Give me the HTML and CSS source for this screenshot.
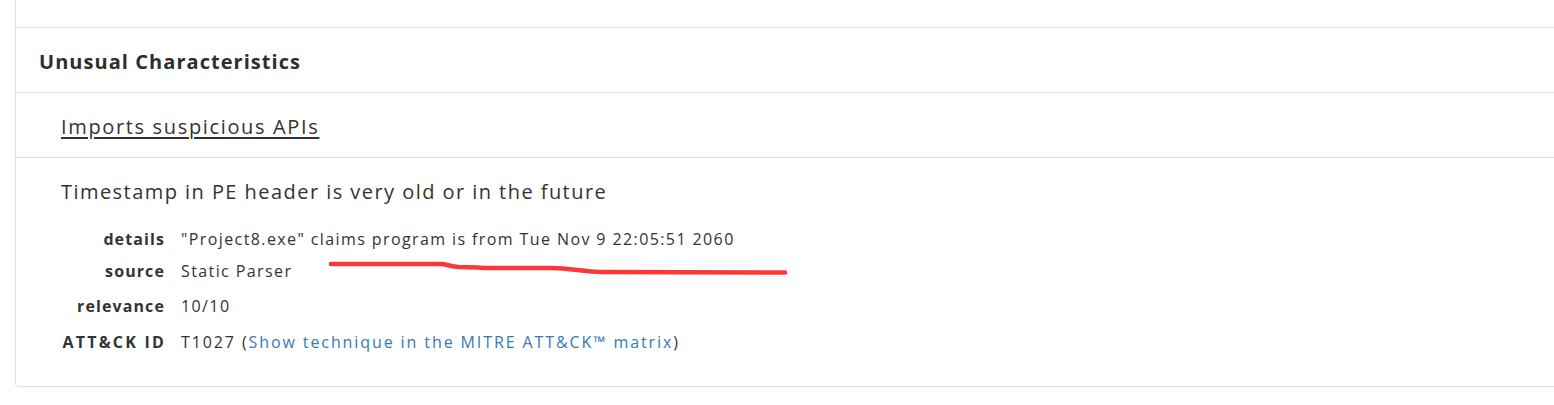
FILE: index.html
```html
<!DOCTYPE html>
<html lang="en">
<head>
<meta charset="utf-8">
<title>Unusual Characteristics</title>
<link rel="stylesheet" href="styles.css">
</head>
<body>
<div class="card">
  <div class="row row-top"></div>
  <div class="row row-head"><h3 class="heading">Unusual Characteristics</h3></div>
  <div class="row row-sub"><a class="sub-link" href="#">Imports suspicious APIs</a></div>
  <div class="item">
    <div class="item-title">Timestamp in PE header is very old or in the future</div>
    <dl class="props">
      <dt>details</dt><dd>"Project8.exe" claims program is from Tue Nov 9 22:05:51 2060</dd>
      <dt>source</dt><dd>Static Parser</dd>
      <dt>relevance</dt><dd>10/10</dd>
      <dt class="caps">ATT&amp;CK ID</dt><dd class="wide">T1027 (<a class="link" href="#">Show technique in the MITRE ATT&amp;CK™ matrix</a>)</dd>
    </dl>
  </div>
  <svg class="annot" width="470" height="20" viewBox="0 0 470 20">
    <path d="M3 4 L113 4 C118 4 120 6 130 7 L150 7.5 C155 8 158 8 165 8 L225 8 C240 8 258 12 272 12 L457 12.5" fill="none" stroke="#fb3838" stroke-width="4.5" stroke-linecap="round" stroke-linejoin="round"/>
  </svg>
</div>
</body>
</html>
```

FILE: styles.css
```css
html, body {
  margin: 0;
  padding: 0;
  background: #ffffff;
  overflow: hidden;
}

body {
  font-family: "Open Sans", "Noto Sans", sans-serif;
  color: #333333;
}

.card {
  position: relative;
  margin-left: 15px;
  width: 1560px;
  border: 1px solid #dddddd;
  border-top: none;
  border-radius: 0 0 4px 4px;
  background: #ffffff;
}

.row {
  border-bottom: 1px solid #dddddd;
}

.row-top {
  height: 27px;
}

.row-head {
  height: 65px;
  box-sizing: border-box;
  display: flex;
  align-items: center;
  padding: 3px 0 0 23px;
}

.heading {
  margin: 0;
  font-size: 20px;
  font-weight: 700;
  letter-spacing: 1.05px;
  color: #2e2e2e;
}

.row-sub {
  height: 65px;
  box-sizing: border-box;
  display: flex;
  align-items: center;
  padding: 3px 0 0 45px;
}

.sub-link {
  font-size: 20px;
  letter-spacing: 1.65px;
  color: #333333;
  text-decoration: underline;
  text-underline-offset: 3px;
}

.item {
  padding: 20px 0 27px 45px;
}

.item-title {
  font-size: 20px;
  line-height: 28px;
  height: 28px;
  margin-bottom: 17px;
  letter-spacing: 1.45px;
}

.props {
  margin: 0;
  display: grid;
  grid-template-columns: 104px 1fr;
  grid-template-rows: 32px 32px 38px 34px;
  column-gap: 16px;
  align-items: center;
  font-size: 16px;
  line-height: 24px;
}

.props dt {
  text-align: right;
  font-weight: 700;
  letter-spacing: 1.1px;
  color: #333333;
}

.props dt.caps {
  letter-spacing: 2.2px;
  margin-right: -1px;
}

.props dd {
  margin: 0;
  letter-spacing: 1.4px;
  color: #333333;
}

.props dd.wide {
  letter-spacing: 1.9px;
}

.link {
  color: #337ab7;
  text-decoration: none;
}

.annot {
  position: absolute;
  left: 312px;
  top: 260px;
}
```
